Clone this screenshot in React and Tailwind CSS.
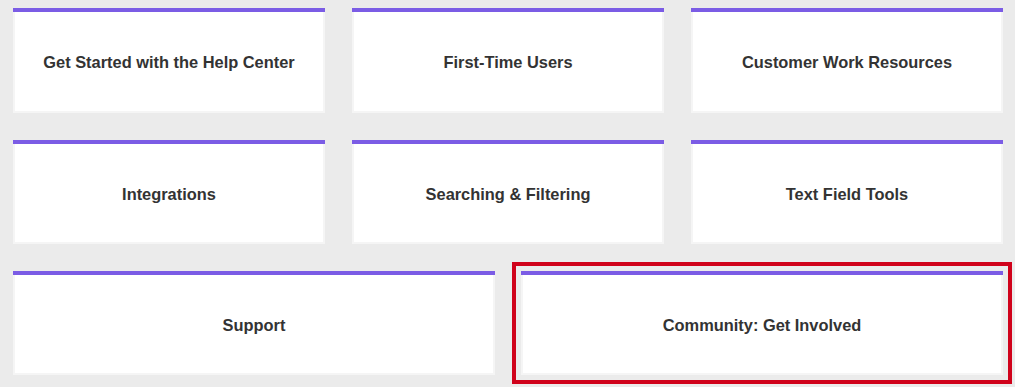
import React from "react";

function Card({ title, tall, selected }) {
  return (
    <div
      className={
        "flex flex-col bg-white " +
        (selected ? "outline-4 outline-offset-[5px] outline-[#d0021b]" : "")
      }
    >
      <div className="h-[4px] bg-[#7b5ce5]" />
      <div
        className={
          "flex items-center justify-center border-x-2 border-b-2 border-[#f5f5f5] pt-[2px] " +
          (tall ? "h-[101px]" : "h-[100px]")
        }
      >
        <span className="text-[16.4px] font-bold text-[#333333] [font-family:'Liberation_Sans',Arial,sans-serif]">
          {title}
        </span>
      </div>
    </div>
  );
}

export default function App() {
  return (
    <div className="w-[1015px] h-[387px] bg-[#ebebeb] pt-[8px] pl-[13px] pr-[12px] flex flex-col gap-[27px] [font-family:'Liberation_Sans',Arial,sans-serif]">
      <div className="grid grid-cols-3 gap-[27px]">
        <Card title="Get Started with the Help Center" tall />
        <Card title="First-Time Users" tall />
        <Card title="Customer Work Resources" tall />
      </div>
      <div className="grid grid-cols-3 gap-[27px]">
        <Card title="Integrations" />
        <Card title="Searching & Filtering" />
        <Card title="Text Field Tools" />
      </div>
      <div className="grid grid-cols-2 gap-[26px]">
        <Card title="Support" />
        <Card title="Community: Get Involved" selected />
      </div>
    </div>
  );
}
